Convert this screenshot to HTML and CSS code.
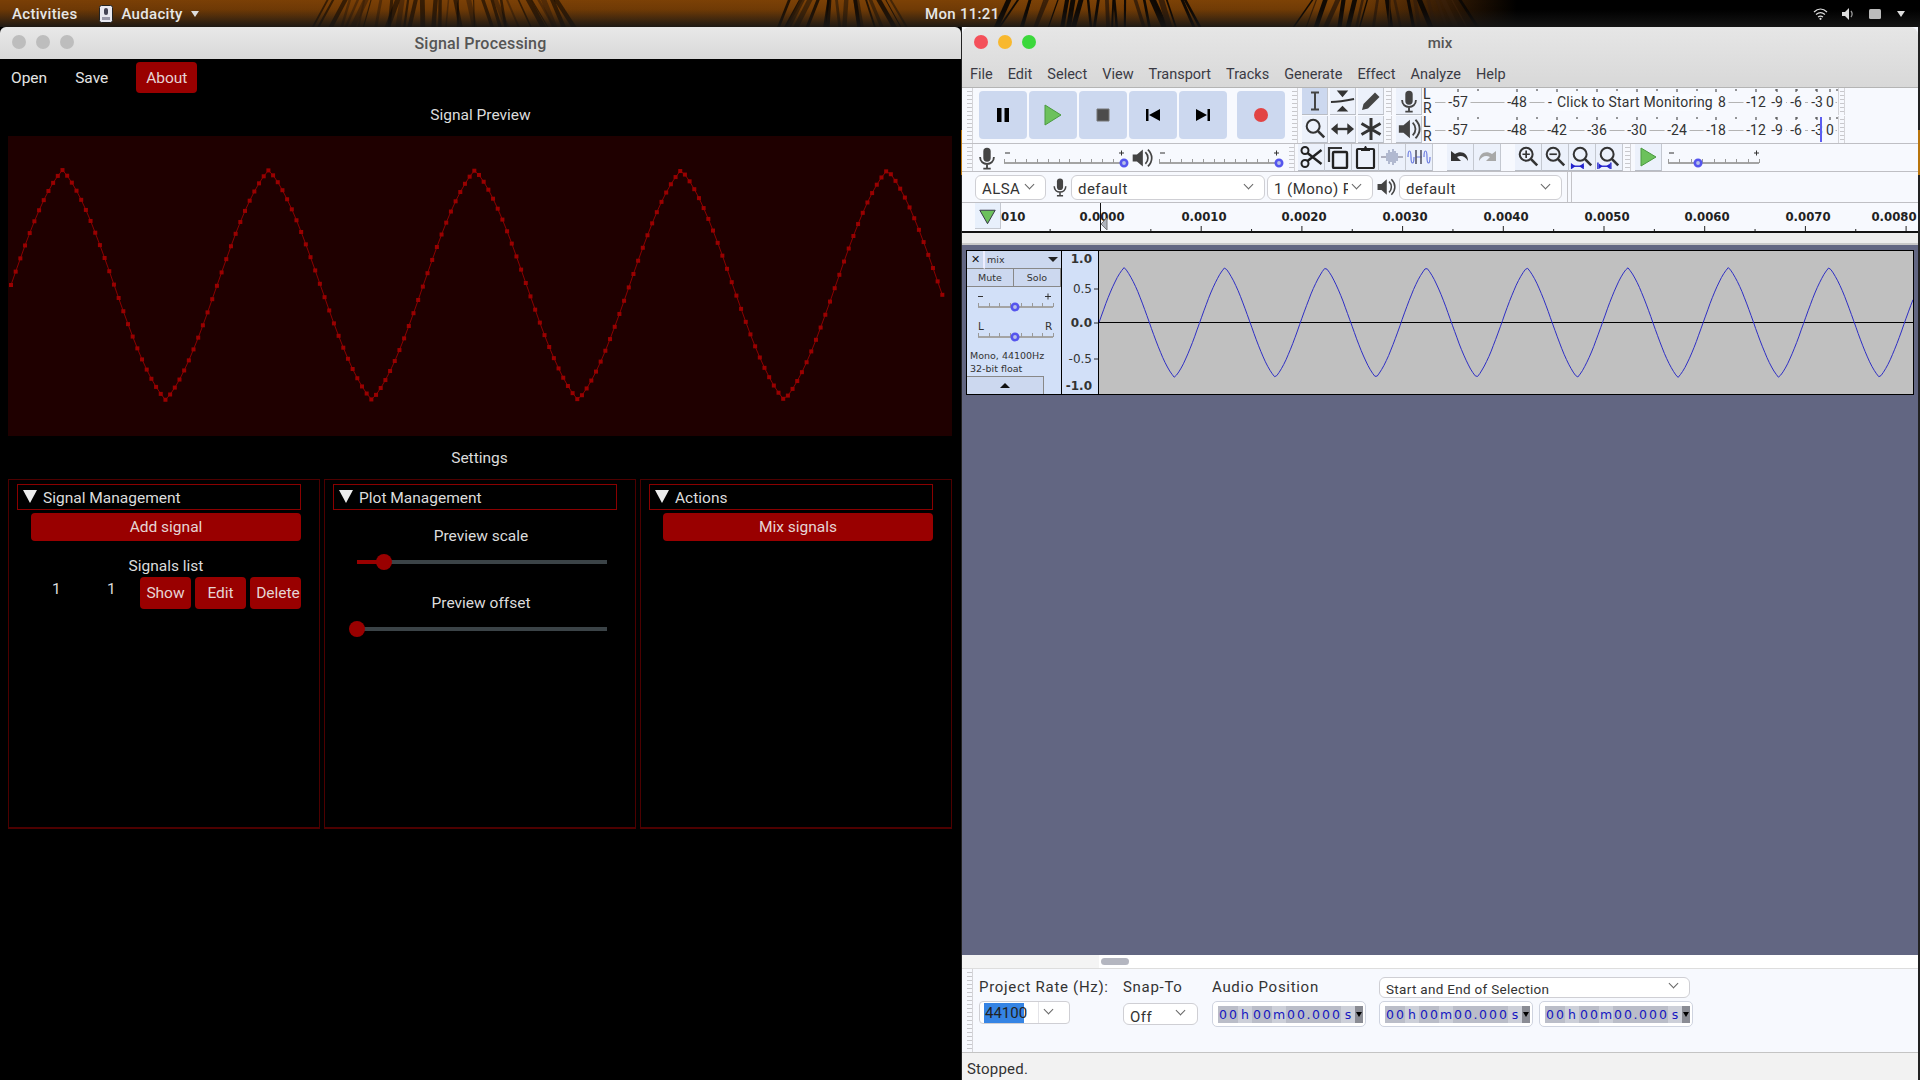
FILE: index.html
```html
<!DOCTYPE html>
<html lang="en">
<head>
  <meta charset="UTF-8">
  <title>Signal Processing and Audacity</title>
  <link rel="stylesheet" href="styles.css">
</head>
<body>
  <svg class="defs" width="0" height="0">
    <defs>
      <symbol id="mic" viewBox="0 0 26 26">
        <rect x="9" y="2" width="8" height="15" rx="4" fill="#444"/>
        <path d="M5.5 12c0 10 15 10 15 0M13 19v5M9 24.500h8" fill="none" stroke="#444" stroke-width="2"/>
      </symbol>
      <symbol id="spk" viewBox="0 0 26 26">
        <path d="M2 9h5l7-6v20l-7-6H2z" fill="#444"/>
        <path d="M17 6c4 4 4 10 0 14M20 3c6 6 6 14 0 20" fill="none" stroke="#444" stroke-width="2"/>
      </symbol>
      <symbol id="glass" viewBox="0 0 26 26">
        <circle cx="11" cy="10" r="7" fill="none" stroke="#333" stroke-width="2.200"/>
        <path d="M16 15l7 7" stroke="#333" stroke-width="2.800"/>
      </symbol>
    </defs>
  </svg>

  <header class="topbar">
    <span class="palms" id="palms"></span>
    <span class="top-item activities">Activities</span>
    <span class="top-item app">
      <svg width="14" height="18" viewBox="0 0 14 18"><rect x=".5" y=".5" width="13" height="17" rx="2" fill="#e8e8f0" stroke="#222"/><rect x="5" y="3" width="4" height="7" rx="2" fill="#445"/><path d="M3 12h8v3H3z" fill="#99a"/></svg>
      Audacity <i class="caret"></i>
    </span>
    <span class="clock">Mon 11:21</span>
    <span class="tray">
      <svg width="15" height="12" viewBox="0 0 15 12"><path d="M1 4c4-4 9-4 13 0M3 6.500c3-2.500 6-2.500 9 0M5 9c2-1.300 3-1.300 5 0" fill="none" stroke="#ddd" stroke-width="1.200"/><circle cx="7.500" cy="10.800" r="1.100" fill="#ddd"/></svg>
      <svg width="13" height="12" viewBox="0 0 13 12"><path d="M0 4h3l4-4v12L3 8H0z" fill="#ddd"/><path d="M9 3c1.500 2 1.500 4 0 6" fill="none" stroke="#999" stroke-width="1.300"/></svg>
      <svg width="13" height="10" viewBox="0 0 13 10"><rect width="12" height="10" rx="1.500" fill="#bbb"/></svg>
      <i class="caret"></i>
    </span>
  </header>

  <section class="win sp">
    <div class="titlebar sp-title">
      <span class="dots"><i></i><i></i><i></i></span>
      <span>Signal Processing</span>
    </div>
    <div class="sp-body">
      <div class="sp-menu">
        <span class="sp-link">Open</span>
        <span class="sp-link save">Save</span>
        <span class="sp-btn about">About</span>
      </div>
      <div class="sp-heading preview-head">Signal Preview</div>
      <svg class="plot" id="plot" viewBox="0 0 944 300"></svg>
      <div class="sp-heading settings-head">Settings</div>
      <div class="panels">
        <div class="panel">
          <div class="panel-head"><i class="tri"></i>Signal Management</div>
          <div class="sp-btn wide">Add signal</div>
          <div class="list-title">Signals list</div>
          <div class="list-row">
            <span class="num">1</span>
            <span class="num second">1</span>
            <span class="sp-btn small first">Show</span>
            <span class="sp-btn small">Edit</span>
            <span class="sp-btn small del">Delete</span>
          </div>
        </div>
        <div class="panel">
          <div class="panel-head"><i class="tri"></i>Plot Management</div>
          <div class="slide-block">
            <div class="slide-label">Preview scale</div>
            <div class="slide"><b class="fill"></b><i class="thumb scale"></i></div>
          </div>
          <div class="slide-block">
            <div class="slide-label">Preview offset</div>
            <div class="slide"><i class="thumb offset"></i></div>
          </div>
        </div>
        <div class="panel">
          <div class="panel-head"><i class="tri"></i>Actions</div>
          <div class="sp-btn wide">Mix signals</div>
        </div>
      </div>
    </div>
  </section>

  <section class="win aud">
    <div class="aud-head">
      <div class="titlebar aud-title">
        <span class="dots color"><i></i><i></i><i></i></span>
        <span>mix</span>
      </div>
      <nav class="menubar">
        <span>File</span><span>Edit</span><span>Select</span><span>View</span><span>Transport</span><span>Tracks</span><span>Generate</span><span>Effect</span><span>Analyze</span><span>Help</span>
      </nav>
    </div>

    <div class="tbrow row1">
      <i class="grip"></i>
      <div class="transport">
        <span class="tbtn"><svg width="24" height="24" viewBox="0 0 24 24"><path d="M6 5h4.500v14H6zM13.500 5H18v14h-4.500z" fill="#000"/></svg></span>
        <span class="tbtn"><svg width="26" height="26" viewBox="0 0 26 26"><path d="M5 3l16 10L5 23z" fill="#6cc15c" stroke="#4a9a40"/></svg></span>
        <span class="tbtn"><svg width="24" height="24" viewBox="0 0 24 24"><path d="M6 6h12v12H6z" fill="#4c4c4c" stroke="#777"/></svg></span>
        <span class="tbtn"><svg width="24" height="24" viewBox="0 0 24 24"><path d="M5 6h2.500v12H5zM19 6v12L8 12z" fill="#000"/></svg></span>
        <span class="tbtn"><svg width="24" height="24" viewBox="0 0 24 24"><path d="M16.500 6H19v12h-2.500zM5 6v12l11-6z" fill="#000"/></svg></span>
        <span class="tbtn rec"><svg width="24" height="24" viewBox="0 0 24 24"><circle cx="12" cy="12" r="7" fill="#e24444"/></svg></span>
      </div>
      <i class="grip after-transport"></i>
      <div class="tools">
        <span class="tool on"><svg width="24" height="24" viewBox="0 0 24 24"><path d="M8 3.500h8M8 20.500h8M12 3.500v17" stroke="#444" stroke-width="2" fill="none"/></svg></span>
        <span class="tool"><svg width="26" height="26" viewBox="0 0 26 26"><path d="M7 2h12l-6 7zM7 24h12l-6-6z" fill="#333"/><path d="M1 14c8 0 14-1 24-3" stroke="#333" stroke-width="2.200" fill="none"/></svg></span>
        <span class="tool"><svg width="24" height="24" viewBox="0 0 24 24"><path d="M3 21l1.500-6L16 3.500l4.500 4.500L9 19.500z" fill="#444"/></svg></span>
        <span class="tool"><svg width="24" height="24"><use href="#glass"/></svg></span>
        <span class="tool"><svg width="26" height="26" viewBox="0 0 26 26"><path d="M6 13h14" stroke="#333" stroke-width="2.500"/><path d="M8 7l-7 6 7 6zM18 7l7 6-7 6z" fill="#333"/></svg></span>
        <span class="tool"><svg width="24" height="24" viewBox="0 0 24 24"><path d="M12 1v22M2.500 6.500l19 11M21.500 6.500l-19 11" stroke="#333" stroke-width="3"/></svg></span>
      </div>
      <div class="meters">
        <div class="meter-row">
          <i class="grip thin"></i>
          <span class="tool"><svg width="24" height="24"><use href="#mic"/></svg></span>
          <span class="lr">L<br>R</span>
          <svg class="meter" id="meter-rec" width="403" height="27"></svg>
          <i class="grip thin end"></i>
        </div>
        <div class="meter-row">
          <i class="grip thin"></i>
          <span class="tool"><svg width="24" height="24"><use href="#spk"/></svg></span>
          <span class="lr">L<br>R</span>
          <svg class="meter" id="meter-play" width="403" height="27"></svg>
          <i class="grip thin end"></i>
        </div>
      </div>
    </div>

    <div class="tbrow row2">
      <i class="grip"></i>
      <svg class="ico mic-in" width="24" height="24"><use href="#mic"/></svg>
      <svg class="mini-slider vol1" data-thumb="1" width="126" height="24"></svg>
      <svg class="ico spk-in" width="22" height="22"><use href="#spk"/></svg>
      <svg class="mini-slider vol2" data-thumb="1" width="126" height="24"></svg>
      <i class="grip edit-grip"></i>
      <span class="tool"><svg width="24" height="24" viewBox="0 0 24 24"><circle cx="6" cy="5.500" r="3.500" fill="none" stroke="#222" stroke-width="2"/><circle cx="6" cy="18.500" r="3.500" fill="none" stroke="#222" stroke-width="2"/><path d="M8.500 8l14 11M8.500 16l14-11" stroke="#222" stroke-width="2.400"/></svg></span>
      <span class="tool"><svg width="24" height="24" viewBox="0 0 24 24"><path d="M3 17V3h13" fill="none" stroke="#333" stroke-width="2.200"/><rect x="7" y="7" width="14" height="16" rx="1" fill="none" stroke="#222" stroke-width="2.400"/></svg></span>
      <span class="tool"><svg width="24" height="24" viewBox="0 0 24 24"><rect x="4" y="4" width="17" height="19" rx="1" fill="none" stroke="#222" stroke-width="2.200"/><path d="M8 6V3h3l1-2h1l1 2h3v3z" fill="#222"/></svg></span>
      <span class="tool"><svg width="24" height="24" viewBox="0 0 24 24"><path d="M1 12h5M18 12h5" stroke="#99a" stroke-width="1.500"/><path d="M7 8v8M9 5v14M11 7v10M13 4v16M15 6v12M17 8v8" stroke="#8a94b4" stroke-width="1.200"/></svg></span>
      <span class="tool"><svg width="24" height="24" viewBox="0 0 24 24"><path d="M1 12c0-8 3-8 3 0s3 8 3 0M17 12c0-8 3-8 3 0s3 8 3 0M9 12h6" fill="none" stroke="#6a7ae0" stroke-width="1.200"/><path d="M9 5v14M14 5v14" stroke="#556" stroke-width="1.600"/></svg></span>
      <span class="tool undo"><svg width="24" height="24" viewBox="0 0 24 24"><path d="M3 6v10h10l-4-4c4-2 8-1 11 4 0-8-7-11-13-7z" fill="#333"/></svg></span>
      <span class="tool"><svg width="24" height="24" viewBox="0 0 24 24"><path d="M21 6v10H11l4-4c-4-2-8-1-11 4 0-8 7-11 13-7z" fill="#a8a8a8"/></svg></span>
      <span class="tool zoom1"><svg width="24" height="24" viewBox="0 0 26 26"><use href="#glass"/><path d="M7 10h8M11 6v8" stroke="#333" stroke-width="1.800"/></svg></span>
      <span class="tool"><svg width="24" height="24" viewBox="0 0 26 26"><use href="#glass"/><path d="M7 10h8" stroke="#333" stroke-width="1.800"/></svg></span>
      <span class="tool"><svg width="24" height="24" viewBox="0 0 26 26"><use href="#glass"/><path d="M1 23h14" stroke="#2222cc" stroke-width="1.500"/><path d="M6 23l-5-3.500v7zM10 23l5-3.500v7z" fill="#2222cc"/></svg></span>
      <span class="tool"><svg width="24" height="24" viewBox="0 0 26 26"><use href="#glass"/><path d="M2 23h12" stroke="#2222cc" stroke-width="1.500"/><path d="M1 19v8M15 19v8" stroke="#2222cc" stroke-width="1.500"/><path d="M6 23l-4-3v6zM10 23l4-3v6z" fill="#2222cc"/></svg></span>
      <i class="grip play-grip"></i>
      <span class="tool"><svg width="24" height="24" viewBox="0 0 24 24"><path d="M5 3l15 9-15 9z" fill="#6cc15c" stroke="#4a9a40"/></svg></span>
      <svg class="mini-slider speed" data-thumb="0.33" width="97" height="24"></svg>
    </div>

    <div class="tbrow row3">
      <span class="combo host">ALSA<i class="chev"></i></span>
      <svg class="ico dev-mic" width="20" height="22"><use href="#mic"/></svg>
      <span class="combo recdev">default<i class="chev"></i></span>
      <span class="combo chans"><span class="clip">1 (Mono) Re</span><i class="chev"></i></span>
      <svg class="ico dev-spk" width="20" height="20"><use href="#spk"/></svg>
      <span class="combo playdev">default<i class="chev"></i></span>
      <i class="row3-end"></i>
    </div>

    <div class="timeline">
      <span class="timeline-btn"><svg width="26" height="22" viewBox="0 0 26 22"><path d="M5 5h16L13 19z" fill="#6cc15c" stroke="#334"/></svg></span>
      <svg class="time-ruler" id="ruler" width="917" height="28"></svg>
    </div>
    <div class="scrub"></div>

    <div class="trackarea">
      <div class="track">
        <div class="track-panel">
          <div class="tp-top"><span class="tp-close">✕</span><span class="tp-name">mix<i class="down"></i></span></div>
          <div class="tp-btns"><span>Mute</span><span>Solo</span></div>
          <svg class="gain" id="gain" width="80" height="62"></svg>
          <div class="tp-info">Mono, 44100Hz<br>32-bit float</div>
          <div class="tp-collapse"><i class="up"></i></div>
        </div>
        <svg class="vruler" id="vruler" width="37" height="143"></svg>
        <svg class="wave" id="wave" width="814" height="143"></svg>
      </div>
    </div>

    <div class="hscroll"><span class="hs-left"></span><span class="hs-thumb"></span></div>

    <div class="selbar">
      <i class="grip tall"></i>
      <div class="sel-col rate">
        <label>Project Rate (Hz):</label>
        <span class="combo ratebox"><span class="picked">44100</span><i class="rate-split"></i><i class="chev"></i></span>
      </div>
      <div class="sel-col snap">
        <label>Snap-To</label>
        <span class="combo snapbox">Off<i class="chev"></i></span>
      </div>
      <div class="sel-col pos">
        <label>Audio Position</label>
        <span class="timebox" data-time></span>
      </div>
      <div class="sel-col range">
        <span class="combo rangebox">Start and End of Selection<i class="chev"></i></span>
        <div class="range-times">
          <span class="timebox" data-time></span>
          <span class="timebox" data-time></span>
        </div>
      </div>
    </div>
    <div class="status">Stopped.</div>
  </section>

  <script src="script.js"></script>
</body>
</html>
```

FILE: styles.css
```css
* { box-sizing: border-box; }
html, body { height: 100%; }
body {
  margin: 0;
  width: 1920px;
  height: 1080px;
  position: relative;
  overflow: hidden;
  font-family: Roboto, sans-serif;
  background: linear-gradient(#222 0, #222 130px, #b8740c 130px, #b8740c 175px, #222 175px);
}
.defs { position: absolute; }
i { display: block; }

/* gnome bar */
.topbar {
  height: 27px;
  position: relative;
  display: flex;
  align-items: center;
  color: #e6e6e6;
  font-size: 15px;
  font-weight: 500;
  letter-spacing: .3px;
  background: linear-gradient(90deg, #7a3f06 0, #7d4206 70%, #3a1e04 75%, #000 79%, #000 100%);
}
.topbar::after {
  content: "";
  position: absolute;
  inset: 0;
  background: linear-gradient(rgba(0,0,0,0) 0, rgba(0,0,0,.1) 35%, rgba(22,22,22,.92) 100%);
}
.palms { position: absolute; inset: 0; }
.palms svg { display: block; }
.top-item, .clock, .tray { z-index: 1; }
.top-item, .tray { position: relative; }
.activities { margin-left: 12px; }
.app { margin-left: 22px; display: flex; align-items: center; gap: 8px; }
.caret { width: 0; height: 0; border: 4.500px solid transparent; border-top: 6px solid #ddd; border-bottom: 0; }
.clock { position: absolute; left: 925px; }
.tray { margin-left: auto; margin-right: 15px; display: flex; align-items: center; gap: 14px; }
.tray .caret { margin-left: 1px; }

/* windows */
.win { position: absolute; top: 27px; height: 1053px; }
.titlebar {
  height: 32px;
  display: flex;
  align-items: center;
  justify-content: center;
  position: relative;
  font-weight: 500;
  color: #555;
  font-size: 15px;
}
.dots { position: absolute; left: 12px; top: 8px; display: flex; gap: 10px; }
.dots i { width: 14px; height: 14px; border-radius: 50%; background: #bdbdbd; }
.dots.color i:nth-child(1) { background: #f4505a; }
.dots.color i:nth-child(2) { background: #f8b82e; }
.dots.color i:nth-child(3) { background: #3bd83b; }

/* signal processing */
.sp { left: 0; width: 961px; background: #000; }
.sp-title {
  background: linear-gradient(#e8e8e8, #d8d8d8);
  border-radius: 6px 6px 0 0;
  font-size: 16px;
  letter-spacing: .2px;
}
.sp-body { padding: 0 8px; color: #dcdcdc; font-size: 15.500px; }
.sp-menu { height: 35px; padding-top: 2px; display: flex; align-items: center; }
.sp-link { margin-left: 3px; color: #e4e4e4; }
.sp-link.save { margin-left: 28px; }
.sp-btn {
  background: #990000;
  border-radius: 4px;
  color: #e6d4d4;
  display: flex;
  align-items: center;
  justify-content: center;
}
.about { margin-left: 28px; width: 61px; height: 31px; }
.sp-heading { display: flex; align-items: center; justify-content: center; }
.preview-head { height: 42px; }
.settings-head { height: 43px; margin-left: -2px; }
.plot { display: block; width: 944px; height: 300px; background: #1f0000; }
.panels { display: grid; grid-template-columns: repeat(3, 312px); gap: 4px; }
.panel {
  height: 350px;
  border: 1px solid #4d0000;
  border-bottom-width: 2px;
  padding: 4px 18px 0 8px;
}
.panel-head {
  height: 26px;
  border: 1px solid #8a0000;
  display: flex;
  align-items: center;
  padding: 2px 0 0 5px;
}
.tri {
  width: 0;
  height: 0;
  margin-right: 6px;
  margin-top: -4px;
  border: 7px solid transparent;
  border-top: 13px solid #eee;
  border-bottom: 0;
}
.wide { height: 28px; margin: 3px 0 0 14px; }
.list-title { margin: 15px 0 0 14px; text-align: center; height: 21px; line-height: 21px; }
.list-row { display: flex; align-items: flex-start; height: 32px; margin-top: 0; }
.num { width: 10px; margin: 3px 0 0 35px; }
.num.second { margin-left: 45px; }
.small { width: 51px; height: 32px; margin-left: 4px; }
.small.first { margin-left: 23px; }
.small.del { padding-left: 5px; }
.slide-block { margin: 16px 0 0 16px; width: 264px; }
.slide-block + .slide-block { margin-top: 29px; }
.slide-label { text-align: center; height: 21px; line-height: 21px; }
.slide {
  height: 4px;
  margin: 13px 6px 0 8px;
  background: #3b4347;
  position: relative;
}
.fill { position: absolute; left: 0; top: 0; height: 4px; width: 30px; background: #990000; }
.thumb {
  position: absolute;
  top: -6px;
  width: 16px;
  height: 16px;
  border-radius: 50%;
  background: #990000;
}
.thumb.scale { left: 19px; }
.thumb.offset { left: -8px; }

/* audacity */
.aud { left: 962px; width: 956px; display: flex; flex-direction: column; background: #f7f9fe; color: #333; }
.aud-head { height: 61px; flex: none; background: linear-gradient(#e6e6e6, #d8d8d8); border-radius: 8px 8px 0 0; border-bottom: 1px solid #b4b4b4; }
.aud-title { font-size: 15px; }
.menubar { display: flex; height: 28px; padding: 2px 0 0 8px; align-items: center; font-size: 14.500px; gap: 15px; color: #3a3a44; }
.tbrow { display: flex; align-items: center; border-bottom: 1px solid #bfbfc4; padding-left: 4px; flex: none; }
.row1 { height: 56px; align-items: stretch; }
.row2 { height: 28px; }
.row3 { height: 31px; }
.grip {
  width: 7px;
  align-self: stretch;
  flex: none;
  border-right: 1px solid #d4d4d8;
  background: repeating-linear-gradient(#c8c8cc 0 1px, transparent 1px 4px) 1px 3px / 5px 100% no-repeat;
}
.transport { display: flex; gap: 2px; padding: 3px 0 0 6px; }
.tbtn { width: 48px; height: 48px; background: #ccd8ef; border-radius: 4px; display: flex; align-items: center; justify-content: center; }
.tbtn.rec { margin-left: 8px; }
.after-transport { margin-left: 6px; }
.tools { display: grid; grid-template-columns: repeat(3, 27px); grid-auto-rows: 27px; gap: 1px 1px; margin-left: 4px; }
.tool { width: 26px; height: 27px; display: flex; align-items: center; justify-content: center; background: #ecf1fb; border-right: 1px solid #c4c8d0; border-bottom: 1px solid #b8bcc4; flex: none; }
.tool.on { background: #ccd8ef; }
.row2 .tool { width: 27px; }
.meters { display: flex; flex-direction: column; gap: 1px; margin-left: 0; }
.meter-row { height: 27px; display: flex; }
.grip.thin { width: 7px; margin-right: 4px; }
.grip.thin.end { margin-right: 0; border-left: 1px solid #d4d4d8; }
.lr { width: 12px; margin-left: 1px; font-size: 14px; line-height: 13.500px; color: #333; }
.meter { display: block; }
.meter text { font: 14px Roboto, sans-serif; fill: #333; }

.ico { flex: none; }
.mic-in { margin-left: 2px; }
.mini-slider { display: block; flex: none; }
.vol1 { margin-left: 5px; }
.spk-in { margin-left: 1px; }
.vol2 { margin-left: 6px; }
.edit-grip { margin-left: 3px; margin-right: 3px; }
.undo { margin-left: 14px; }
.zoom1 { margin-left: 14px; }
.play-grip { margin: 0 4px 0 1px; }
.speed { margin-left: 6px; }

.combo {
  background: #fff;
  border: 1px solid #cfcfd4;
  border-radius: 6px;
  display: flex;
  align-items: center;
  height: 25px;
  font-size: 15px;
  letter-spacing: .45px;
  padding: 3px 0 0 6px;
  position: relative;
  color: #333;
  flex: none;
}
.chev { position: absolute; right: 12px; top: 5px; width: 7px; height: 7px; border-right: 1.500px solid #666; border-bottom: 1.500px solid #666; transform: rotate(45deg); }
.host { width: 71px; margin-left: 9px; }
.dev-mic { margin-left: 4px; }
.recdev { width: 194px; margin-left: 1px; }
.chans { width: 106px; margin-left: 2px; }
.clip { width: 74px; overflow: hidden; white-space: nowrap; }
.dev-spk { margin-left: 3px; }
.playdev { width: 163px; margin-left: 3px; }
.row3-end { width: 5px; height: 30px; margin-left: 5px; border-left: 1px solid #c4c4c8; border-right: 1px solid #c4c4c8; }

.timeline { height: 30px; flex: none; display: flex; padding-left: 13px; border-bottom: 2px solid #111; background: #f7f9fe; position: relative; }
.timeline-btn { width: 26px; height: 26px; background: #e8f0fc; border-right: 1px solid #c4c8d0; border-bottom: 1px solid #c4c8d0; display: flex; align-items: center; justify-content: center; position: relative; flex: none; z-index: 1; }
.time-ruler { display: block; margin-left: -1px; position: relative; }
.time-ruler text { font: bold 11.700px "DejaVu Sans", sans-serif; fill: #222; }
.scrub { height: 12px; flex: none; background: #ececec; border-bottom: 2px solid #c8c8c8; }

.trackarea { flex: 1; background: #626682; padding: 5px 0 0 4px; }
.track { display: flex; width: 948px; height: 145px; border: 1px solid #000; }
.track-panel { width: 96px; background: #d2e0f8; border-right: 1px solid #000; font-size: 10.500px; color: #333; }
.tp-top { display: flex; height: 18px; }
.tp-close { width: 18px; background: #ccd8ef; border-right: 2px solid #eef; border-bottom: 1px solid #888; font-size: 11px; display: flex; align-items: center; justify-content: center; color: #111; }
.tp-name { flex: 1; background: #ccd8ef; border-bottom: 1px solid #888; padding-left: 2px; display: flex; align-items: center; justify-content: space-between; font-family: "DejaVu Sans", sans-serif; font-size: 9.500px; }
.down { width: 0; height: 0; border: 5px solid transparent; border-top: 5.500px solid #222; border-bottom: 0; margin-right: 3px; }
.tp-btns { display: flex; height: 18px; font-family: "DejaVu Sans", sans-serif; font-size: 9.500px; }
.tp-btns span { flex: 1; background: #ccd8ef; border-right: 1px solid #888; border-bottom: 1px solid #888; display: flex; align-items: center; justify-content: center; }
.gain { display: block; margin: 1px 0 0 8px; }
.gain text { font: 10.500px "DejaVu Sans", sans-serif; fill: #333; }
.tp-info { font-family: "DejaVu Sans", sans-serif; font-size: 9.500px; line-height: 12.500px; padding-left: 3px; height: 26px; }
.tp-collapse { width: 77px; height: 18px; background: #ccd8ef; border-right: 1px solid #888; border-top: 1px solid #888; display: flex; align-items: center; justify-content: center; }
.up { width: 0; height: 0; border: 5px solid transparent; border-bottom: 5.500px solid #111; border-top: 0; }
.vruler { display: block; background: #d2e0f8; border-right: 1px solid #000; flex: none; }
.vruler text { font: 12px "DejaVu Sans", sans-serif; fill: #333; text-anchor: end; }
.vruler text.b { font-weight: bold; }
.wave { display: block; background: #c0c0c0; flex: none; }

.hscroll { height: 14px; flex: none; background: #fff; display: flex; border-bottom: 1px solid #ddd; }
.hs-left { width: 137px; background: #f4f4f4; }
.hs-thumb { width: 28px; height: 7px; background: #b4b6c0; border-radius: 4px; margin: 3px 0 0 2px; }
.selbar { height: 84px; flex: none; display: flex; border-bottom: 1px solid #c4c4c4; padding-left: 4px; }
.grip.tall { margin-right: 6px; }
.sel-col { display: flex; flex-direction: column; align-items: flex-start; }
.sel-col label { font-size: 15px; letter-spacing: .7px; color: #333; height: 24px; margin-top: 6px; line-height: 24px; white-space: nowrap; }
.rate { width: 144px; }
.snap { width: 89px; }
.pos { width: 167px; }
.ratebox { width: 91px; height: 23px; margin: 2px 0 0 0; padding: 0 0 0 4px; border-radius: 4px; }
.picked { background: #3584e4; color: #222; width: 40px; line-height: 20px; padding-left: 1px; letter-spacing: 0; }
.rate-split { position: absolute; left: 58px; top: 0; bottom: 0; width: 1px; background: #e4e4e8; }
.ratebox .chev { right: 17px; top: 4px; }
.snapbox { width: 75px; height: 22px; margin-top: 4px; padding-top: 5px; }
.snapbox .chev { top: 3px; right: 13px; }
.rangebox { width: 311px; height: 21px; margin-top: 8px; font-size: 13.500px; letter-spacing: .3px; }
.rangebox .chev { top: 2px; }
.range-times { display: flex; gap: 6px; margin-top: 3px; }
.timebox {
  display: flex;
  align-items: center;
  width: 154px;
  height: 26px;
  margin-top: 2px;
  padding-left: 5px;
  background: #fff;
  border: 1px solid #cfd4e0;
  border-radius: 5px;
}
.range-times .timebox { margin-top: 0; }
.timebox span { height: 17px; line-height: 17px; text-align: center; font-family: "DejaVu Sans", sans-serif; font-size: 12.500px; color: #1414c0; background: #babdc8; }
.timebox .d { width: 10px; }
.timebox .u { width: 14px; background: #cdd0d9; }
.timebox .p { width: 5px; }
.timebox .a { width: 8px; background: #8a8c94; position: relative; }
.timebox .a::after { content: ""; position: absolute; left: 1px; top: 6px; border: 3px solid transparent; border-top: 5px solid #000; border-bottom: 0; }
.status { height: 27px; flex: none; background: #f2f2f2; font-size: 15px; letter-spacing: .2px; padding: 7px 0 0 5px; color: #333; }
```

FILE: script.js
```js
const NS = 'http://www.w3.org/2000/svg';

function el(parent, name, attrs, text) {
  const node = document.createElementNS(NS, name);
  for (const key in attrs) node.setAttribute(key, attrs[key]);
  if (text !== undefined) node.textContent = text;
  parent.appendChild(node);
  return node;
}

// the captured signal is between a sine and a triangle
function shape(t) {
  const s = Math.sin(t);
  return .5 * s + .5 * (2 / Math.PI) * Math.asin(s);
}

function sineLine(svg, x0, x1, step, period, phaseX, mid, amp, color) {
  const pts = [];
  for (let x = x0; x <= x1; x += step) {
    const y = mid - amp * shape((x - phaseX) / period * 2 * Math.PI);
    pts.push([x, y]);
  }
  el(svg, 'polyline', {
    points: pts.map(p => p[0].toFixed(1) + ',' + p[1].toFixed(1)).join(' '),
    fill: 'none', stroke: color, 'stroke-width': 1
  });
  return pts;
}

// signal preview
const plot = document.getElementById('plot');
sineLine(plot, 3, 935, 4.68, 206.2, 3, 149, 115, '#8a0000').forEach(p => {
  el(plot, 'rect', { x: p[0] - 2, y: p[1] - 2, width: 4, height: 4, fill: '#990000' });
});

// audacity wave
const wave = document.getElementById('wave');
el(wave, 'line', { x1: 0, x2: 814, y1: 71.5, y2: 71.5, stroke: '#000' });
sineLine(wave, 0, 814, 2.28, 100.7, 0, 71.5, 55, '#2e2ec4');

// time ruler
const ruler = document.getElementById('ruler');
const labels = [[1102, '0.0000'], [1204, '0.0010'], [1304, '0.0020'], [1405, '0.0030'], [1506, '0.0040'],
  [1607, '0.0050'], [1707, '0.0060'], [1808, '0.0070'], [1894, '0.0080']];
const rx = 1000;
el(ruler, 'text', { x: 1001 - rx, y: 18 }, '010');
labels.forEach(l => el(ruler, 'text', { x: l[0] - rx, y: 18, 'text-anchor': 'middle' }, l[1]));
for (let i = -1; i < 17; i++) {
  const x = 1100 + i * 50.35 - rx + .5;
  if (x < 0 || x > 911) continue;
  el(ruler, 'line', { x1: x, x2: x, y1: i % 2 ? 26 : 23, y2: 28, stroke: '#222' });
}
el(ruler, 'line', { x1: 100.5, x2: 100.5, y1: 0, y2: 28, stroke: '#111' });
el(ruler, 'path', { d: 'M107 15v12l-6-6z', fill: '#b0b4bc', stroke: '#777' });

// meters
const meterX = [[1458, '-57'], [1517, '-48'], [1557, '-42'], [1597, '-36'], [1637, '-30'], [1677, '-24'],
  [1716, '-18'], [1756, '-12'], [1777, '-9'], [1796, '-6'], [1817, '-3'], [1830, '0']];
function drawMeter(id, withHint) {
  const svg = document.getElementById(id);
  const mx = 1435;
  el(svg, 'line', { x1: 0, x2: 402, y1: 14.5, y2: 14.5, stroke: '#b4b4b4' });
  meterX.forEach(m => {
    const x = m[0] - mx;
    const w = m[1].length * 7 + 4;
    el(svg, 'line', { x1: x, x2: x, y1: 1, y2: 4, stroke: '#333' });
    el(svg, 'line', { x1: x + 20, x2: x + 20, y1: 1, y2: 3, stroke: '#333' });
    el(svg, 'rect', { x: x - w / 2, y: 7, width: w, height: 15, fill: '#f7f9fe' });
  });
  meterX.forEach(m => {
    const hidden = withHint && m[0] > 1540 && m[0] < 1730;
    if (!hidden) el(svg, 'text', { x: m[0] - mx, y: 19, 'text-anchor': 'middle' }, m[1]);
  });
  if (withHint) {
    el(svg, 'text', { x: 113, y: 19 }, '-');
    el(svg, 'text', { x: 283, y: 19 }, '8');
    el(svg, 'rect', { x: 117, y: 6, width: 166, height: 17, fill: '#f9fbff' });
    el(svg, 'text', { x: 200, y: 19, 'text-anchor': 'middle', style: 'letter-spacing:.2px' }, 'Click to Start Monitoring');
  } else {
    el(svg, 'rect', { x: 385, y: 1, width: 2, height: 25, fill: '#5c5cf0' });
  }
}
drawMeter('meter-rec', true);
drawMeter('meter-play', false);

function thumb(svg, x, y) {
  el(svg, 'circle', { cx: x, cy: y, r: 3.2, fill: '#b8c0e8', stroke: '#5555ee', 'stroke-width': 2.6 });
}

function sliderLine(svg, x0, x1, y) {
  el(svg, 'line', { x1: x0, x2: x1, y1: y, y2: y, stroke: '#a4a4a4', 'stroke-width': 2 });
  const n = Math.round((x1 - x0) / 11);
  for (let i = 0; i <= n; i++) {
    const x = Math.round(x0 + (x1 - x0) * i / n) + .5;
    el(svg, 'line', { x1: x, x2: x, y1: y - 4, y2: y, stroke: '#999' });
  }
}

// toolbar sliders
document.querySelectorAll('.mini-slider').forEach(svg => {
  const w = +svg.getAttribute('width');
  const x0 = 0, x1 = w - 6;
  sliderLine(svg, x0, x1, 17);
  el(svg, 'path', { d: 'M' + (x0 + 1) + ' 7h5M' + (x1 - 5) + ' 7h5M' + (x1 - 2.5) + ' 4.500v5', stroke: '#333', fill: 'none' });
  thumb(svg, x0 + (x1 - x0) * svg.dataset.thumb, 17);
});

// track panel sliders
const gain = document.getElementById('gain');
el(gain, 'path', { d: 'M3 8.500h5M70 8.500h6M73 5.500v6', stroke: '#333', fill: 'none' });
sliderLine(gain, 3, 78, 19);
thumb(gain, 40, 19);
el(gain, 'text', { x: 3, y: 42 }, 'L');
el(gain, 'text', { x: 70, y: 42 }, 'R');
sliderLine(gain, 3, 78, 49);
thumb(gain, 40, 49);

// vertical ruler
const vr = document.getElementById('vruler');
[[12, '1.0', true], [42, '0.5', false], [76, '0.0', true], [112, '-0.5', false], [139, '-1.0', true]].forEach(r => {
  const t = el(vr, 'text', { x: 30, y: r[0] }, r[1]);
  if (r[2]) t.setAttribute('class', 'b');
});
[38, 72, 108].forEach(y => el(vr, 'line', { x1: 32, x2: 36, y1: y, y2: y, stroke: '#333' }));

// time boxes
document.querySelectorAll('[data-time]').forEach(box => {
  const parts = '00h00m00.000s'.split('');
  parts.forEach(c => {
    const s = document.createElement('span');
    s.textContent = c;
    s.className = /\d/.test(c) ? 'd' : c === '.' ? 'p' : 'u';
    box.appendChild(s);
  });
  const arrow = document.createElement('span');
  arrow.className = 'a';
  box.appendChild(arrow);
});

// palm fronds behind the top bar
const palms = document.getElementById('palms');
const bar = el(palms, 'svg', { width: 1920, height: 27 });
let seed = 7;
function rnd() {
  seed = (seed * 97 + 13) % 1009;
  return seed / 1009;
}
[[325, 232, 34, .6], [790, 100, 16, .8], [1010, 175, 24, .95], [1310, 150, 20, .95]].forEach(c => {
  for (let i = 0; i < c[2]; i++) {
    const t = i / (c[2] - 1);
    const x = c[0] + c[1] * t + (rnd() - .5) * 8;
    const lean = (t - .5) * 30 + (rnd() - .5) * 10;
    const w = 1 + rnd() * 5;
    el(bar, 'path', {
      d: 'M' + x + ' 0L' + (x + lean) + ' 27L' + (x + lean + w) + ' 27L' + (x + w) + ' 0z',
      fill: rnd() > .35 ? '#0c0704' : '#3a2008', opacity: c[3]
    });
  }
});
```
